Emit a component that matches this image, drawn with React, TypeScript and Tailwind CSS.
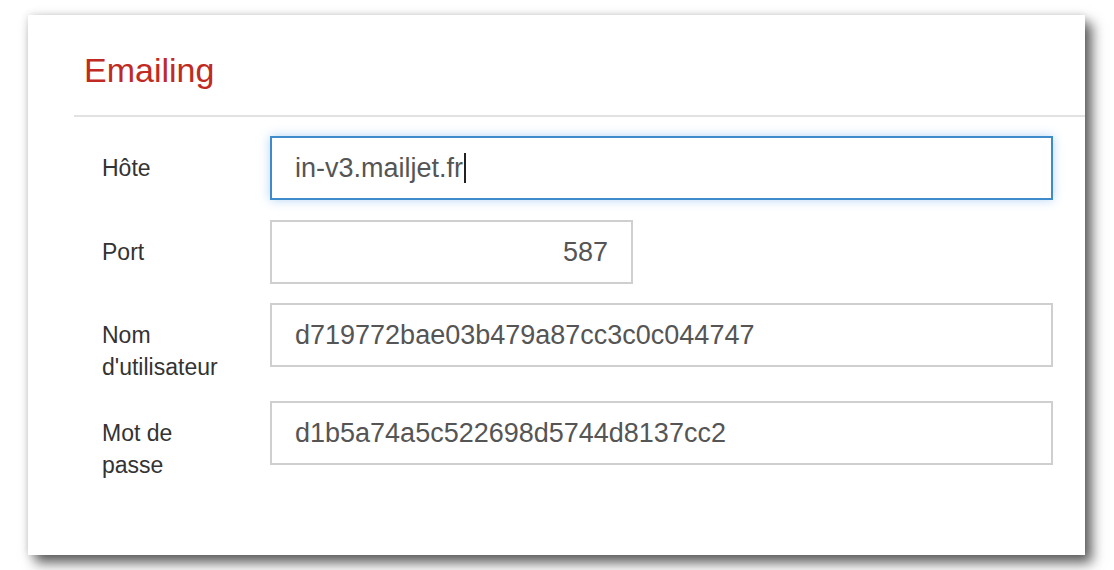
import React from "react";

const labelCls = "w-[168px] shrink-0 pt-[16px] text-[23px] leading-[32px] text-[#333]";
const inputCls =
  "h-[64px] flex items-center border-2 border-[#cfcfcf] bg-white px-[23px] text-[27px] text-[#555]";

export default function App() {
  return (
    <div
      className="w-[1114px] h-[570px] overflow-hidden bg-white pl-[28px] pt-[15px]"
      style={{ fontFamily: '"Liberation Sans", Arial, sans-serif' }}
    >
      <div className="w-[1057px] h-[540px] bg-white shadow-[7px_8px_12px_rgba(0,0,0,0.62),0_0_8px_rgba(0,0,0,0.15)]">
        {/* Header */}
        <div className="ml-[46px] border-b-2 border-[#e2e2e2] pl-[10px] pt-[35px] pb-[25px]">
          <h1 className="text-[34px] leading-[40px] text-[#c12a22]">Emailing</h1>
        </div>

        {/* Form */}
        <div className="pl-[74px] pr-[32px] pt-[19px] flex flex-col">
          <div className="flex items-start mb-[20px]">
            <div className={labelCls}>Hôte</div>
            <div className="flex-1 h-[64px] flex items-center border-2 border-[#3d8bcb] bg-white px-[23px] text-[27px] text-[#555] shadow-[0_0_10px_rgba(90,160,235,0.45)]">
              <span>in-v3.mailjet.fr</span>
              <span className="ml-[1px] inline-block w-[1.5px] h-[30px] bg-[#222]" />
            </div>
          </div>

          <div className="flex items-start mb-[19px]">
            <div className={labelCls}>Port</div>
            <div className={`${inputCls} w-[363px] justify-end`}>587</div>
          </div>

          <div className="flex items-start mb-[18px]">
            <div className={labelCls}>
              Nom
              <br />
              d'utilisateur
            </div>
            <div className={`${inputCls} flex-1`}>d719772bae03b479a87cc3c0c044747</div>
          </div>

          <div className="flex items-start">
            <div className={labelCls}>
              Mot de
              <br />
              passe
            </div>
            <div className={`${inputCls} flex-1`}>d1b5a74a5c522698d5744d8137cc2</div>
          </div>
        </div>
      </div>
    </div>
  );
}
